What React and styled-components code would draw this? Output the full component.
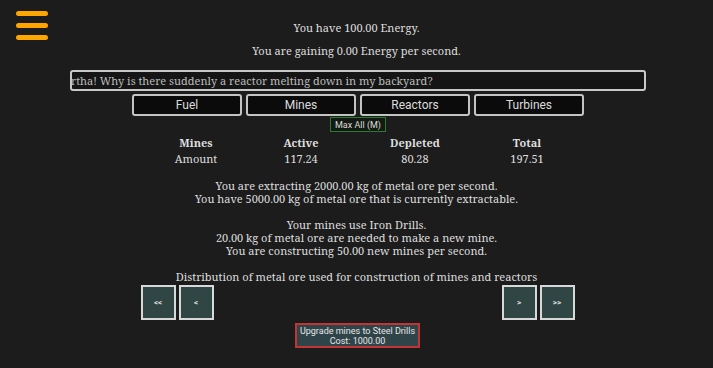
import React from "react";
import styled, { createGlobalStyle } from "styled-components";

const GlobalStyle = createGlobalStyle`
  body {
    margin: 0;
    background: #1c1c1c;
    color: #dedede;
    font-family: "Noto Serif", "DejaVu Serif", "Liberation Serif", serif;
    font-size: 11px;
  }
`;

const Page = styled.div`
  position: relative;
  width: 713px;
  height: 368px;
  padding-top: 20px;
  box-sizing: border-box;
  display: flex;
  flex-direction: column;
  align-items: center;
`;

const MenuButton = styled.div`
  position: absolute;
  left: 16px;
  top: 11px;
  width: 32px;
  display: flex;
  flex-direction: column;
  gap: 7px;
`;

const MenuBar = styled.span`
  display: block;
  height: 5px;
  border-radius: 3px;
  background: #ffa500;
`;

const Line = styled.div`
  line-height: 16px;
  margin-bottom: ${(p) => p.gap || 0}px;
`;

const Ticker = styled.div`
  width: 572px;
  height: 17px;
  border: 2px solid #c8c8c8;
  border-radius: 3px;
  background: #151515;
  overflow: hidden;
  white-space: nowrap;
  color: #bbbbbb;
  font-size: 11px;
  line-height: 17px;
  margin-left: 2px;
`;

const TickerText = styled.span`
  display: inline-block;
  margin-left: ${(p) => p.offset}px;
`;

const Tabs = styled.div`
  display: flex;
  gap: 4px;
  margin-top: 3px;
  margin-left: 3px;
`;

const Tab = styled.button`
  width: 110px;
  height: 22px;
  background: #0b0b0b;
  color: #dcdcdc;
  border: 2px solid #c4c4c4;
  border-radius: 3px;
  font-family: Roboto, "Liberation Sans", sans-serif;
  font-size: 12px;
  padding: 0;
`;

const MaxButton = styled.button`
  margin-top: 1px;
  margin-left: 3px;
  height: 15px;
  padding: 0 4px;
  background: #121a12;
  color: #dcdcdc;
  border: 1px solid #2b7a34;
  font-family: Roboto, "Liberation Sans", sans-serif;
  font-size: 9px;
  line-height: 12px;
`;

const Table = styled.div`
  display: grid;
  grid-template-columns: 110px 100px 128px 96px;
  margin-top: 3px;
  margin-left: 3px;
  line-height: 16px;
`;

const Cell = styled.div`
  text-align: center;
  font-weight: ${(p) => (p.head ? "bold" : "normal")};
`;

const Block = styled.div`
  margin-top: ${(p) => p.top}px;
  text-align: center;
  line-height: 13px;
`;

const SliderRow = styled.div`
  display: flex;
  gap: 3px;
  margin-top: 2px;
  margin-left: 2px;
`;

const Track = styled.div`
  width: 282px;
`;

const StepButton = styled.button`
  width: 35px;
  height: 35px;
  padding: 0;
  background: #2f4644;
  color: #e0e0e0;
  border: 2px solid #d8d8d8;
  font-family: Roboto, "Liberation Sans", sans-serif;
  font-size: 8px;
  font-weight: bold;
`;

const UpgradeButton = styled.button`
  margin-top: 3px;
  margin-left: 2px;
  width: 125px;
  height: 25px;
  padding: 0;
  background: #2f4449;
  color: #e6e6e6;
  border: 2px solid #c23535;
  font-family: Roboto, "Liberation Sans", sans-serif;
  font-size: 9px;
  line-height: 10px;
  white-space: nowrap;
`;

const table = [
  ["Mines", "Active", "Depleted", "Total"],
  ["Amount", "117.24", "80.28", "197.51"],
];

export default function App() {
  return (
    <>
      <GlobalStyle />
      <Page>
        <MenuButton>
          <MenuBar />
          <MenuBar />
          <MenuBar />
        </MenuButton>
        <Line gap={7}>You have 100.00 Energy.</Line>
        <Line gap={11}>You are gaining 0.00 Energy per second.</Line>
        <Ticker>
          <TickerText offset={-17}>
            Martha! Why is there suddenly a reactor melting down in my backyard?
          </TickerText>
        </Ticker>
        <Tabs>
          {["Fuel", "Mines", "Reactors", "Turbines"].map((t) => (
            <Tab key={t}>{t}</Tab>
          ))}
        </Tabs>
        <MaxButton>Max All (M)</MaxButton>
        <Table>
          {table.map((row, i) =>
            row.map((c, j) => (
              <Cell key={i + "-" + j} head={i === 0}>
                {c}
              </Cell>
            ))
          )}
        </Table>
        <Block top={12}>
          You are extracting 2000.00 kg of metal ore per second.
          <br />
          You have 5000.00 kg of metal ore that is currently extractable.
          <br />
          <br />
          Your mines use Iron Drills.
          <br />
          20.00 kg of metal ore are needed to make a new mine.
          <br />
          You are constructing 50.00 new mines per second.
          <br />
          <br />
          Distribution of metal ore used for construction of mines and reactors
        </Block>
        <SliderRow>
          <StepButton>&lt;&lt;</StepButton>
          <StepButton>&lt;</StepButton>
          <Track />
          <StepButton>&gt;</StepButton>
          <StepButton>&gt;&gt;</StepButton>
        </SliderRow>
        <UpgradeButton>
          Upgrade mines to Steel Drills
          <br />
          Cost: 1000.00
        </UpgradeButton>
      </Page>
    </>
  );
}
